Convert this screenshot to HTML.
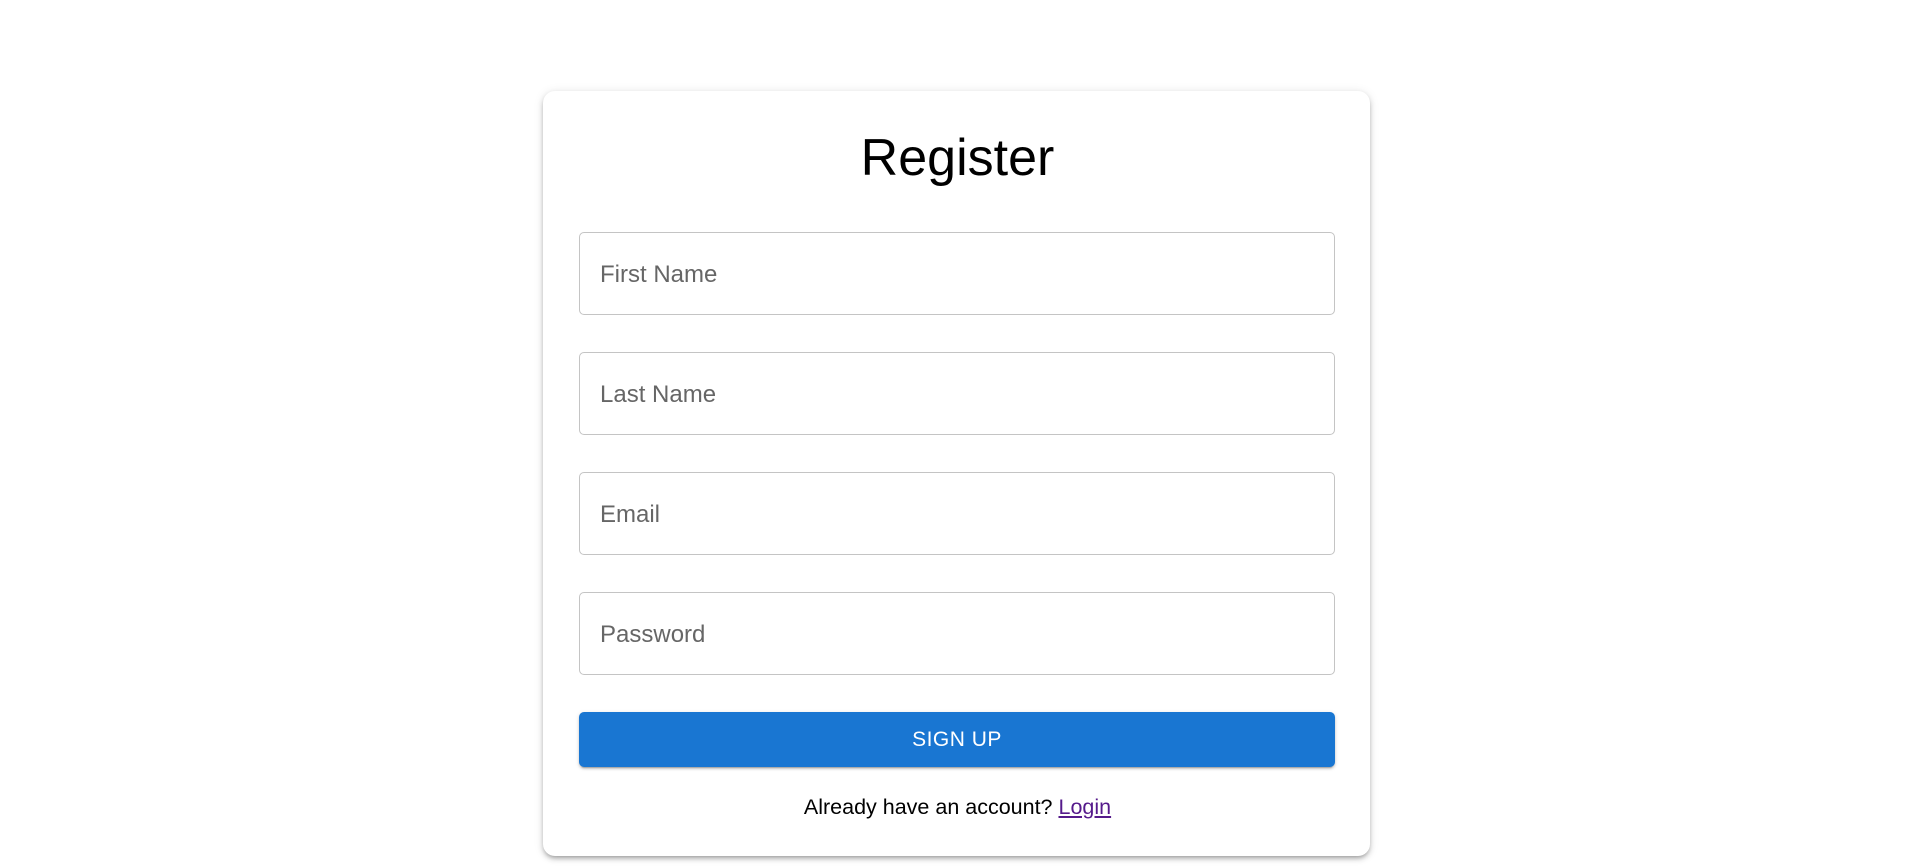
<!DOCTYPE html>
<html><head><meta charset="utf-8"><style>
html,body{margin:0;padding:0;background:#fff;width:1915px;height:868px;overflow:hidden;font-family:"Liberation Sans",Arial,sans-serif;}
.card{position:absolute;left:543px;top:91px;width:827px;height:765px;background:#fff;border-radius:12px;box-shadow:0 3px 4px -2px rgba(0,0,0,.25),0 3px 6px rgba(0,0,0,.16),0 1px 10px rgba(0,0,0,.1);}
h1{position:absolute;left:0;right:0;top:124px;margin:0;text-align:center;font-weight:400;font-size:52px;line-height:68px;color:#000;}
.inp{position:absolute;left:579px;width:754px;height:81px;border:1px solid #c4c4c4;border-radius:5px;box-sizing:content-box;}
.inp span{position:absolute;left:20px;top:1px;line-height:81px;font-size:24px;color:#666;}
.btn{position:absolute;left:579px;top:712px;width:756px;height:55px;background:#1976d2;border-radius:5px;color:#fff;text-align:center;line-height:55px;font-size:21px;letter-spacing:.5px;box-shadow:0 3px 1px -2px rgba(0,0,0,.2),0 2px 2px rgba(0,0,0,.14),0 1px 5px rgba(0,0,0,.12);}
.foot{position:absolute;left:0;width:1915px;top:793px;text-align:center;font-size:21.5px;line-height:28px;color:#000;}
.foot a{color:#551a8b;text-decoration:underline;}
</style></head><body>
<div class="card"></div>
<h1>Register</h1>
<div class="inp" style="top:232px"><span>First Name</span></div>
<div class="inp" style="top:352px"><span>Last Name</span></div>
<div class="inp" style="top:472px"><span>Email</span></div>
<div class="inp" style="top:592px"><span>Password</span></div>
<div class="btn">SIGN UP</div>
<div class="foot">Already have an account? <a>Login</a></div>
</body></html>
